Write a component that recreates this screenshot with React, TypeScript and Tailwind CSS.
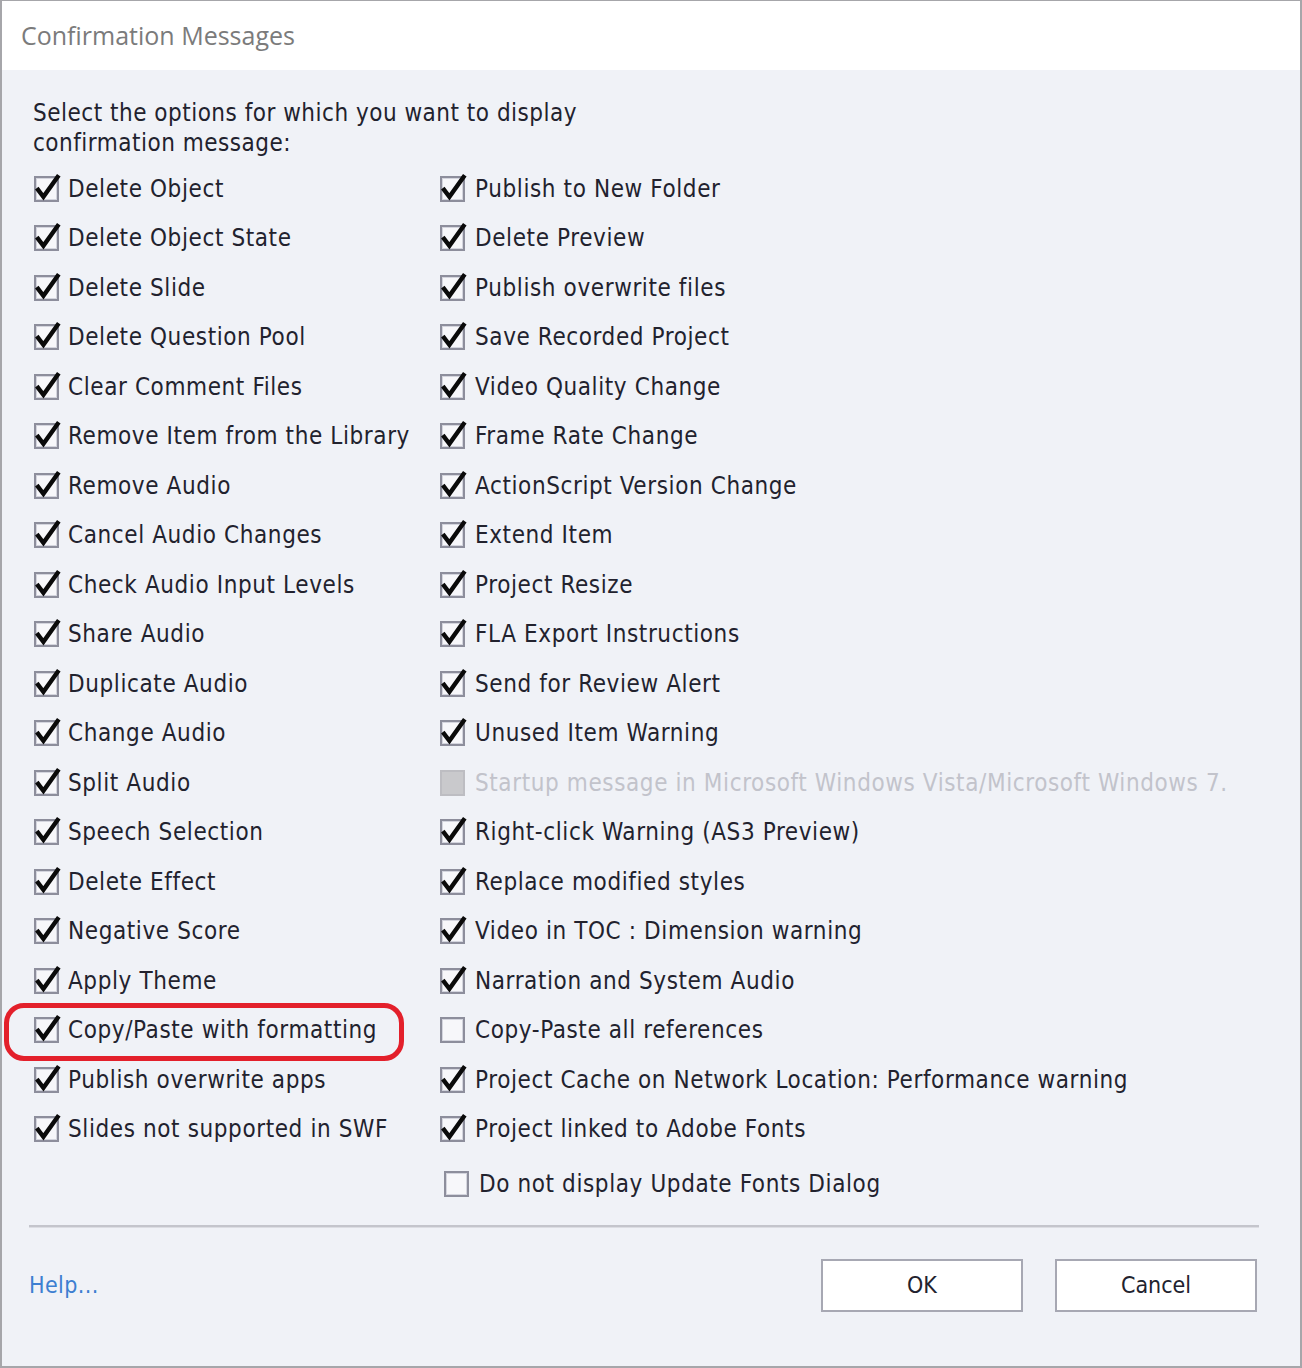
import React from 'react';

type State = 'on' | 'off' | 'disabled';

const left: string[] = [
  'Delete Object',
  'Delete Object State',
  'Delete Slide',
  'Delete Question Pool',
  'Clear Comment Files',
  'Remove Item from the Library',
  'Remove Audio',
  'Cancel Audio Changes',
  'Check Audio Input Levels',
  'Share Audio',
  'Duplicate Audio',
  'Change Audio',
  'Split Audio',
  'Speech Selection',
  'Delete Effect',
  'Negative Score',
  'Apply Theme',
  'Copy/Paste with formatting',
  'Publish overwrite apps',
  'Slides not supported in SWF',
];

const right: [string, State][] = [
  ['Publish to New Folder', 'on'],
  ['Delete Preview', 'on'],
  ['Publish overwrite files', 'on'],
  ['Save Recorded Project', 'on'],
  ['Video Quality Change', 'on'],
  ['Frame Rate Change', 'on'],
  ['ActionScript Version Change', 'on'],
  ['Extend Item', 'on'],
  ['Project Resize', 'on'],
  ['FLA Export Instructions', 'on'],
  ['Send for Review Alert', 'on'],
  ['Unused Item Warning', 'on'],
  ['Startup message in Microsoft Windows Vista/Microsoft Windows 7.', 'disabled'],
  ['Right-click Warning (AS3 Preview)', 'on'],
  ['Replace modified styles', 'on'],
  ['Video in TOC : Dimension warning', 'on'],
  ['Narration and System Audio', 'on'],
  ['Copy-Paste all references', 'off'],
  ['Project Cache on Network Location: Performance warning', 'on'],
  ['Project linked to Adobe Fonts', 'on'],
];

const font = { fontFamily: '"DejaVu Sans Condensed", "DejaVu Sans", Tahoma, sans-serif' };

function Box({ state }: { state: State }) {
  if (state === 'disabled') {
    return (
      <span className="relative block w-[25px] h-[26px] shrink-0 border-2 border-[#bdbdc2] bg-[#c9c9cc]" />
    );
  }
  return (
    <span className="relative block w-[25px] h-[26px] shrink-0 border-2 border-[#8d8e9c] bg-[#f7f7fa]">
      <span className="absolute inset-0 border border-[#d4d5de]" />
      {state === 'on' && (
        <svg
          className="absolute -left-[2px] -top-[2px] w-[25px] h-[26px] overflow-visible"
          viewBox="0 0 25 26"
        >
          <path d="M2.8 12.2 L9.4 20.8 L24.8 -0.8" fill="none" stroke="#0a0a0a" strokeWidth="4.4" strokeLinejoin="miter" />
        </svg>
      )}
    </span>
  );
}

function Row({ label, state, gap }: { label: string; state: State; gap: string }) {
  return (
    <div className={`flex items-center h-[49.5px] ${gap}`}>
      <Box state={state} />
      <span
        className={`text-[24px] tracking-[0.6px] leading-none whitespace-nowrap ${state === 'disabled' ? 'text-[#c2c3cb]' : 'text-[#22222e]'}`}
      >
        {label}
      </span>
    </div>
  );
}

export default function App() {
  return (
    <div className="w-[1302px] h-[1368px] bg-white">
      <div className="relative w-[1302px] h-[1368px] border-x-2 border-t border-b-2 border-[#a6a6aa] bg-[#f0f2f7] flex flex-col" style={font}>
        {/* Title bar */}
        <div
          className="h-[69px] bg-white flex items-center pl-[19px] text-[25px] text-[#7b7b7b] shrink-0"
          style={{ fontFamily: '"Open Sans", "Noto Sans", sans-serif' }}
        >
          Confirmation Messages
        </div>

        <div className="pl-[31px] pt-[28px]">
          <p className="text-[24px] tracking-[0.5px] leading-[30px] text-[#22222e] w-[600px]">
            Select the options for which you want to display confirmation message:
          </p>

          <div className="flex mt-[6px] pl-[1px]">
            <div className="w-[406px] shrink-0">
              {left.map((l) => (
                <Row key={l} label={l} state="on" gap="gap-[9px]" />
              ))}
            </div>
            <div>
              {right.map(([l, s]) => (
                <Row key={l} label={l} state={s} gap="gap-[10px]" />
              ))}
              <div className="pl-[4px] mt-[5px]">
                <Row label="Do not display Update Fonts Dialog" state="off" gap="gap-[10px]" />
              </div>
            </div>
          </div>
        </div>

        {/* Separator */}
        <div className="ml-[27px] mr-[41px] mt-[16px] h-[3px] bg-[#c4c5cc] border-b border-[#dcdde3]" />

        {/* Footer */}
        <div className="flex items-center justify-between pl-[27px] pr-[43px] mt-[31px]">
          <a className="text-[23px] tracking-[0.4px] text-[#3d7fd1] cursor-pointer">Help...</a>
          <div className="flex gap-[32px]">
            <button className="w-[202px] h-[53px] bg-white border-2 border-[#a7a8b3] text-[23px] text-[#22222e]">
              OK
            </button>
            <button className="w-[202px] h-[53px] bg-white border-2 border-[#a7a8b3] text-[23px] text-[#22222e]">
              Cancel
            </button>
          </div>
        </div>

        {/* Red highlight annotation */}
        <div className="absolute left-[2px] top-[1002px] w-[400px] h-[58px] rounded-[20px] border-[5px] border-[#e3202b] pointer-events-none" />
      </div>
    </div>
  );
}
